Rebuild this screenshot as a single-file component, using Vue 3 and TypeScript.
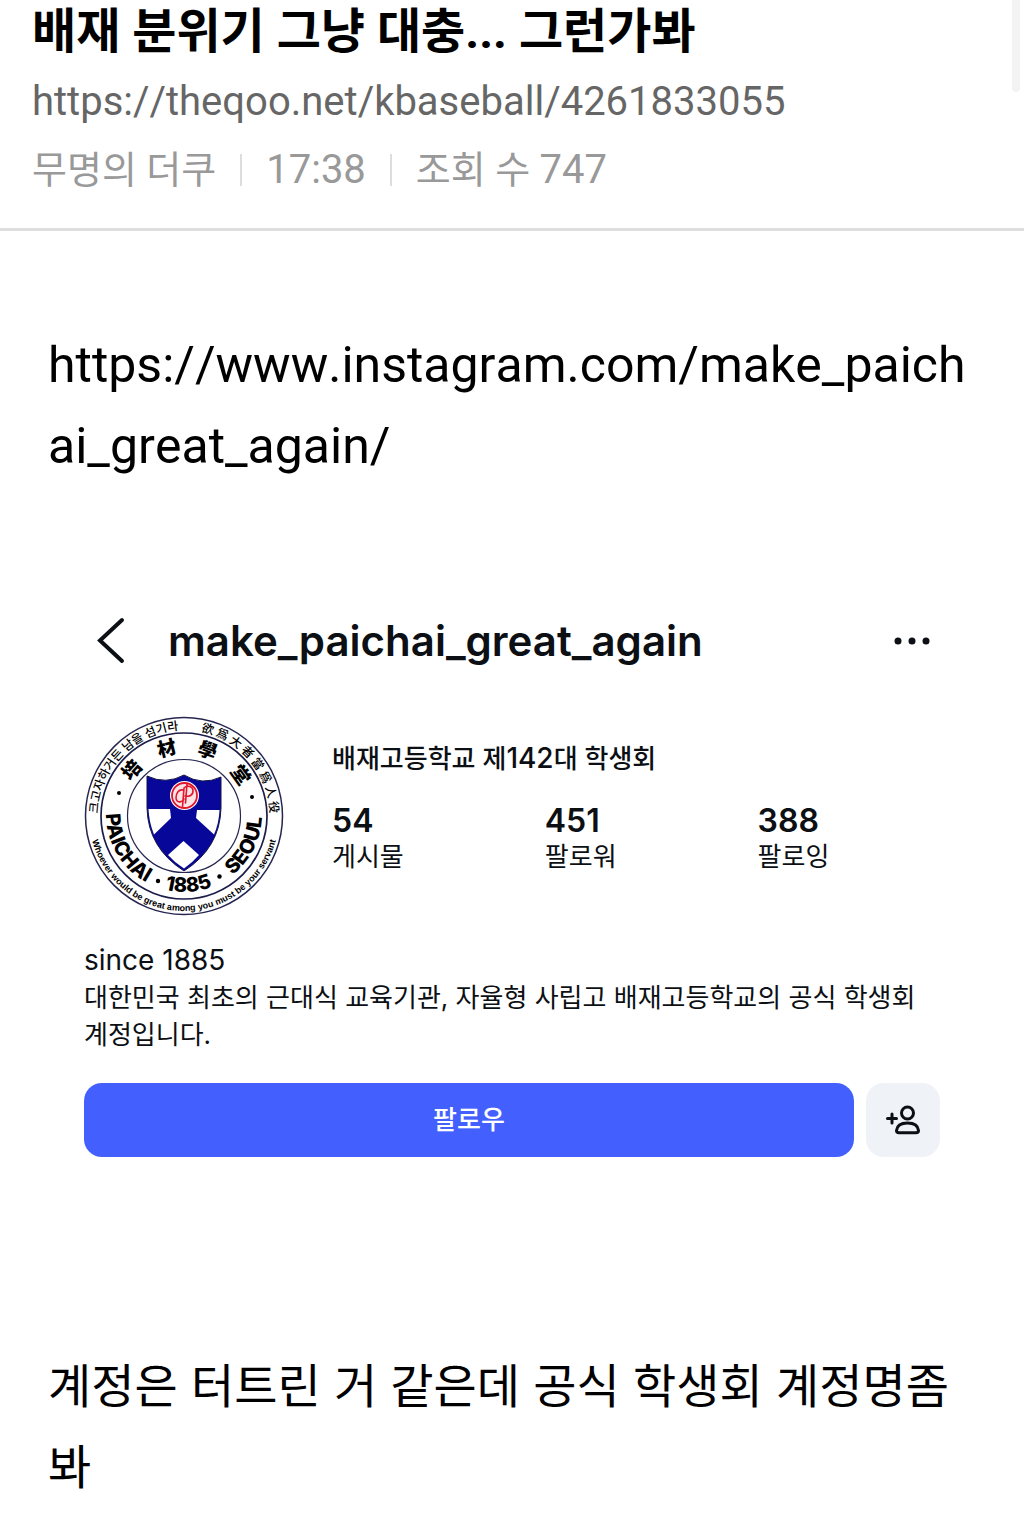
<script setup lang="ts">
interface Stat {
  value: number
  label: string
}

interface SealGlyph {
  text: string
  offset: string
}

const stats: Stat[] = [
  { value: 54, label: '게시물' },
  { value: 451, label: '팔로워' },
  { value: 388, label: '팔로잉' },
]

const sealHanja: SealGlyph[] = [
  { text: '培', offset: '23%' },
  { text: '材', offset: '42%' },
  { text: '學', offset: '61%' },
  { text: '堂', offset: '80%' },
]

const sealName: SealGlyph[] = [
  { text: 'PAICHAI', offset: '17%' },
  { text: '1885', offset: '52%' },
  { text: 'SEOUL', offset: '85%' },
]
</script>

<template>
  <main class="page">
    <div class="scroll-thumb" aria-hidden="true"></div>

    <header class="post-head">
      <h1 class="title">배재 분위기 그냥 대충... 그런가봐</h1>
      <a class="permalink" href="https://theqoo.net/kbaseball/4261833055">https://theqoo.net/kbaseball/4261833055</a>
      <div class="meta">
        <span>무명의 더쿠</span>
        <i class="bar"></i>
        <span class="num">17:38</span>
        <i class="bar"></i>
        <span>조회 수 <span class="num">747</span></span>
      </div>
    </header>

    <article class="post-body">
      <p class="link-line">
        <a href="https://www.instagram.com/make_paichai_great_again/">https://www.instagram.com/make_paichai_great_again/</a>
      </p>

      <section class="profile">
        <div class="topbar">
          <button class="icon-btn" type="button" aria-label="뒤로">
            <svg width="32" height="50" viewBox="0 0 32 50">
              <path d="M28 4 L6 24.500 L28 45" fill="none" stroke="#0c1014" stroke-width="4" stroke-linecap="round" stroke-linejoin="miter" />
            </svg>
          </button>
          <h2 class="handle">make_paichai_great_again</h2>
          <button class="icon-btn" type="button" aria-label="더 보기">
            <svg width="40" height="10" viewBox="0 0 40 10" fill="#0c1014">
              <circle cx="6" cy="5" r="3.500" />
              <circle cx="20" cy="5" r="3.500" />
              <circle cx="34" cy="5" r="3.500" />
            </svg>
          </button>
        </div>

        <div class="summary">
          <svg class="seal" width="200" height="200" viewBox="0 0 200 200" role="img" aria-label="배재학당">
            <defs>
              <path id="ring-motto-top" d="M14 100 A86 86 0 0 1 186 100" />
              <path id="ring-motto-bottom" d="M5 100 A95 95 0 0 0 195 100" />
              <path id="ring-hanja" d="M37 100 A63 63 0 0 1 163 100" />
              <path id="ring-name" d="M22 98 A78 78 0 0 0 178 98" />
            </defs>
            <circle cx="100" cy="100" r="98.500" fill="#fff" stroke="#25254f" stroke-width="1.500" />
            <circle cx="100" cy="100" r="83" fill="none" stroke="#1d1d4a" stroke-width="1.700" />
            <circle cx="100" cy="100" r="56.500" fill="none" stroke="#25254f" stroke-width="1.200" />

            <text class="motto-ko"><textPath href="#ring-motto-top" startOffset="1%">크고자하거든 남을 섬기라</textPath></text>
            <text class="motto-ko" text-anchor="end"><textPath href="#ring-motto-top" startOffset="99%">欲 爲 大 者 當 爲 人 役</textPath></text>
            <text class="motto-en" text-anchor="middle"><textPath href="#ring-motto-bottom" startOffset="50%">Whoever would be great among you must be your servant</textPath></text>
            <text v-for="g in sealHanja" :key="g.offset" class="hanja" text-anchor="middle">
              <textPath href="#ring-hanja" :startOffset="g.offset">{{ g.text }}</textPath>
            </text>
            <text v-for="g in sealName" :key="g.offset" class="name" text-anchor="middle">
              <textPath href="#ring-name" :startOffset="g.offset">{{ g.text }}</textPath>
            </text>
            <circle cx="35" cy="77" r="2" />
            <circle cx="168" cy="81" r="2" />
            <circle cx="74" cy="165" r="2.200" />
            <circle cx="135.500" cy="160.500" r="2.200" />

            <path d="M63 60 Q82 69 100 59 Q118 70 137 61 L137 92 Q136 132 100 155 Q64 132 63 92 Z" fill="#07079a" stroke="#151548" stroke-width="1" />
            <path d="M64.500 93 L86 93 L87 102 L70 118.500 Q65 106 64.500 93 Z" fill="#fff" />
            <path d="M135.500 94 L113 94 L112 102 L130 118.500 Q135 107 135.500 94 Z" fill="#fff" />
            <path d="M99.500 125 L115 139 Q108 147 100 152.500 Q91 147 84 139 Z" fill="#fff" />
            <circle cx="100.500" cy="79.500" r="14.500" fill="#fff" />
            <circle cx="100.500" cy="79.500" r="12.500" fill="#fbe3e6" stroke="#e0162b" stroke-width="1.800" />
            <path d="M98.500 91 L100 72 C103 69 109 70 109 75 C109 79.500 105 81 101 80 M103 68 L101.500 87 M99 74 C95 73 92 77 92 82 C92.500 87 98 87 100 83" fill="none" stroke="#e0162b" stroke-width="1.600" stroke-linecap="round" />
          </svg>

          <div class="facts">
            <p class="display-name">배재고등학교 제<span class="ordinal">142</span>대 학생회</p>
            <ul class="stats">
              <li v-for="s in stats" :key="s.label">
                <strong>{{ s.value }}</strong>
                <span>{{ s.label }}</span>
              </li>
            </ul>
          </div>
        </div>

        <div class="bio">
          <p class="since">since 1885</p>
          <p>대한민국 최초의 근대식 교육기관, 자율형 사립고 배재고등학교의 공식 학생회 계정입니다.</p>
        </div>

        <div class="actions">
          <button class="follow" type="button">팔로우</button>
          <button class="suggest" type="button" aria-label="추천 계정">
            <svg width="36" height="32" viewBox="0 0 36 32" fill="none" stroke="#0c1014" stroke-width="3" stroke-linecap="round" stroke-linejoin="round">
              <path d="M2.500 14.500 H11.500 M7 10 V19" />
              <circle cx="22.500" cy="9" r="6" />
              <path d="M11.500 26.500 C12 21.500 16 19 22.500 19 C29 19 33 21.500 33.500 26.500 C33.500 28 32.500 28.800 31 28.800 H14 C12.500 28.800 11.500 28 11.500 26.500 Z" />
            </svg>
          </button>
        </div>
      </section>

      <p class="comment">계정은 터트린 거 같은데 공식 학생회 계정명좀봐</p>
    </article>
  </main>
</template>

<style>
body {
  background: #fff;
}
</style>

<style scoped>
.page {
  position: relative;
  font-family: Roboto, 'Noto Sans CJK KR', sans-serif;
  color: #000;
}

h1,
h2,
p,
ul {
  margin: 0;
  padding: 0;
}

a {
  color: inherit;
  text-decoration: none;
}

button {
  border: 0;
  padding: 0;
  font: inherit;
  background: none;
}

svg {
  display: block;
}

.scroll-thumb {
  position: absolute;
  top: 0;
  right: 4px;
  width: 8px;
  height: 92px;
  border-radius: 0 0 4px 4px;
  background: #f3f3f3;
}

.post-head {
  display: flex;
  flex-direction: column;
  padding: 2px 32px 26px;
  border-bottom: 3px solid #dedede;
}

.title {
  font-size: 48px;
  line-height: 60px;
  font-weight: 700;
}

.permalink {
  margin: 8px 0 4px;
  font-size: 40px;
  line-height: 64px;
  font-kerning: none;
  color: #666;
}

.meta {
  display: flex;
  align-items: center;
  font-size: 38px;
  line-height: 64px;
  color: #999;
}

.num {
  font-size: 40px;
}

.bar {
  width: 2px;
  height: 32px;
  margin: 0 24px;
  background: #ddd;
}

.post-body {
  padding: 94px 48px 16px;
}

.link-line {
  font-size: 50px;
  line-height: 81px;
  font-kerning: none;
  word-break: break-all;
}

.profile {
  padding: 122px 36px 120px;
  font-family: Inter, 'Noto Sans CJK KR', sans-serif;
  color: #0c1014;
}

.topbar {
  display: flex;
  align-items: center;
  padding: 0 8px 0 10px;
}

.handle {
  flex: 1;
  margin-left: 42px;
  font-size: 42px;
  line-height: 64px;
  font-weight: 600;
}

.summary {
  display: flex;
  gap: 48px;
  margin-top: 43px;
}

.seal {
  flex: none;
}

.facts {
  flex: 1;
  padding-top: 24px;
}

.display-name {
  font-size: 26px;
  line-height: 36px;
  font-weight: 500;
}

.ordinal {
  font-size: 28px;
}

.stats {
  display: flex;
  margin-top: 24px;
  list-style: none;
}

.stats li {
  display: flex;
  flex-direction: column;
  flex: 0 0 35%;
}

.stats strong {
  font-size: 32px;
  line-height: 40px;
  font-weight: 600;
}

.stats span {
  font-size: 26px;
  line-height: 32px;
}

.bio {
  margin-top: 26px;
  font-size: 26px;
  line-height: 37px;
}

.since {
  font-size: 28px;
}

.actions {
  display: flex;
  gap: 12px;
  margin-top: 30px;
}

.follow {
  flex: 1;
  height: 74px;
  padding-bottom: 6px;
  border-radius: 18px;
  font-size: 26px;
  font-weight: 500;
  color: #fff;
  background: #4360ff;
}

.suggest {
  display: flex;
  align-items: center;
  justify-content: center;
  width: 74px;
  height: 74px;
  border-radius: 18px;
  background: #eff2f6;
}

.comment {
  margin-top: 68px;
  font-family: Inter, 'Noto Sans CJK KR', sans-serif;
  font-size: 47px;
  line-height: 81px;
  word-break: break-all;
}

.motto-ko {
  font: 500 12px 'Noto Sans CJK KR', sans-serif;
}

.motto-en {
  font: 700 9px 'Liberation Sans Narrow', 'Liberation Sans', sans-serif;
}

.hanja {
  font: 900 19px 'Noto Sans CJK KR', sans-serif;
}

.name {
  font: 800 20px Inter, sans-serif;
}
</style>
